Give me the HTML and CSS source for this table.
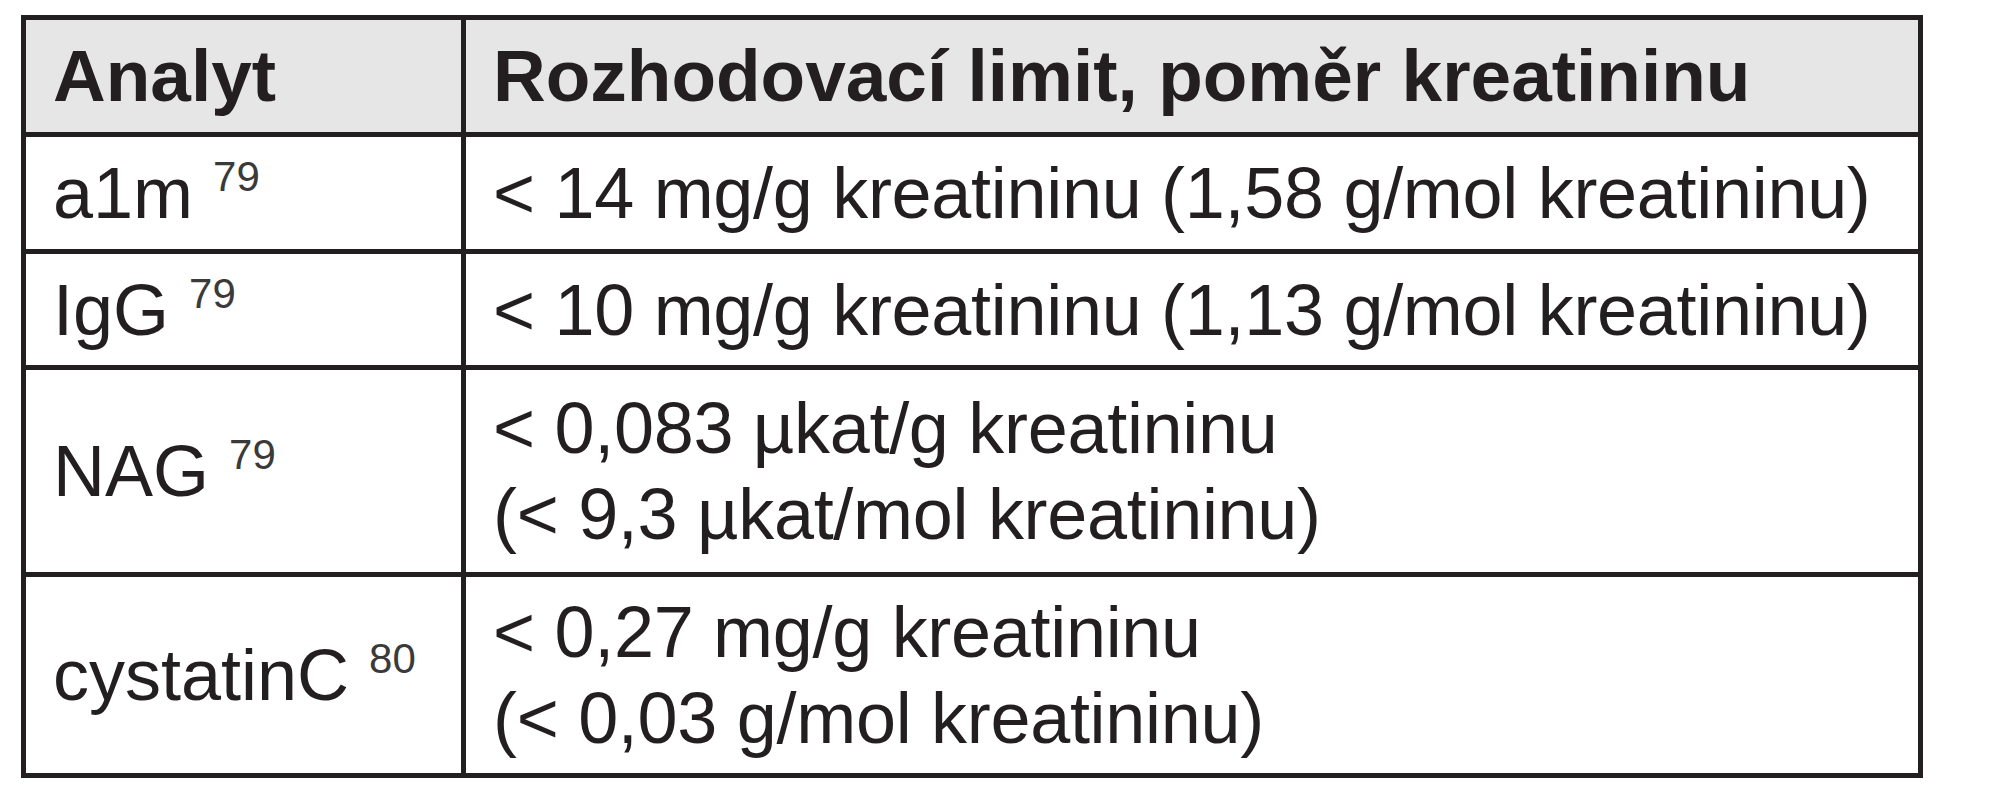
FILE: index.html
```html
<!DOCTYPE html>
<html lang="cs">
<head>
<meta charset="utf-8">
<title>Rozhodovací limit</title>
<link rel="stylesheet" href="styles.css">
</head>
<body>
<div class="page">
  <table class="limits">
    <thead>
      <tr class="row-head">
        <th class="c1">Analyt</th>
        <th class="c2">Rozhodovací limit, poměr kreatininu</th>
      </tr>
    </thead>
    <tbody>
      <tr class="row-a">
        <td class="c1">a1m <sup>79</sup></td>
        <td class="c2">&lt; 14 mg/g kreatininu (1,58 g/mol kreatininu)</td>
      </tr>
      <tr class="row-b">
        <td class="c1">IgG <sup>79</sup></td>
        <td class="c2">&lt; 10 mg/g kreatininu (1,13 g/mol kreatininu)</td>
      </tr>
      <tr class="row-c">
        <td class="c1">NAG <sup>79</sup></td>
        <td class="c2">&lt; 0,083 µkat/g kreatininu<br>(&lt; 9,3 µkat/mol kreatininu)</td>
      </tr>
      <tr class="row-d">
        <td class="c1">cystatinC <sup>80</sup></td>
        <td class="c2">&lt; 0,27 mg/g kreatininu<br>(&lt; 0,03 g/mol kreatininu)</td>
      </tr>
    </tbody>
  </table>
</div>
</body>
</html>
```

FILE: styles.css
```css
html, body {
  margin: 0;
  padding: 0;
  background: #ffffff;
}

.page {
  padding: 15px 0 0 21px;
}

.limits {
  border-collapse: separate;
  border-spacing: 0;
  border-top: 5px solid #231f20;
  border-left: 5px solid #231f20;
  font-family: "Liberation Sans", Arial, sans-serif;
  font-size: 72px;
  color: #231f20;
  table-layout: fixed;
}

.limits th,
.limits td {
  box-sizing: border-box;
  border-right: 5px solid #231f20;
  border-bottom: 5px solid #231f20;
  padding: 0 0 0 27px;
  text-align: left;
  vertical-align: middle;
  line-height: 86px;
  white-space: nowrap;
}

.limits td.c2 {
  letter-spacing: -0.3px;
}

.limits th {
  background: #e6e6e6;
  font-weight: bold;
  font-size: 73px;
}

.c1 { width: 440px; }
.c2 { width: 1457px; }

.row-head th { height: 117px; }
.row-a td { height: 117px; }
.row-b td { height: 116px; }
.row-c td { height: 207px; }
.row-d td { height: 201px; }

.limits sup {
  font-size: 42px;
  line-height: 0;
  vertical-align: 27px;
  letter-spacing: 0;
  color: #3a3a3a;
}
```
